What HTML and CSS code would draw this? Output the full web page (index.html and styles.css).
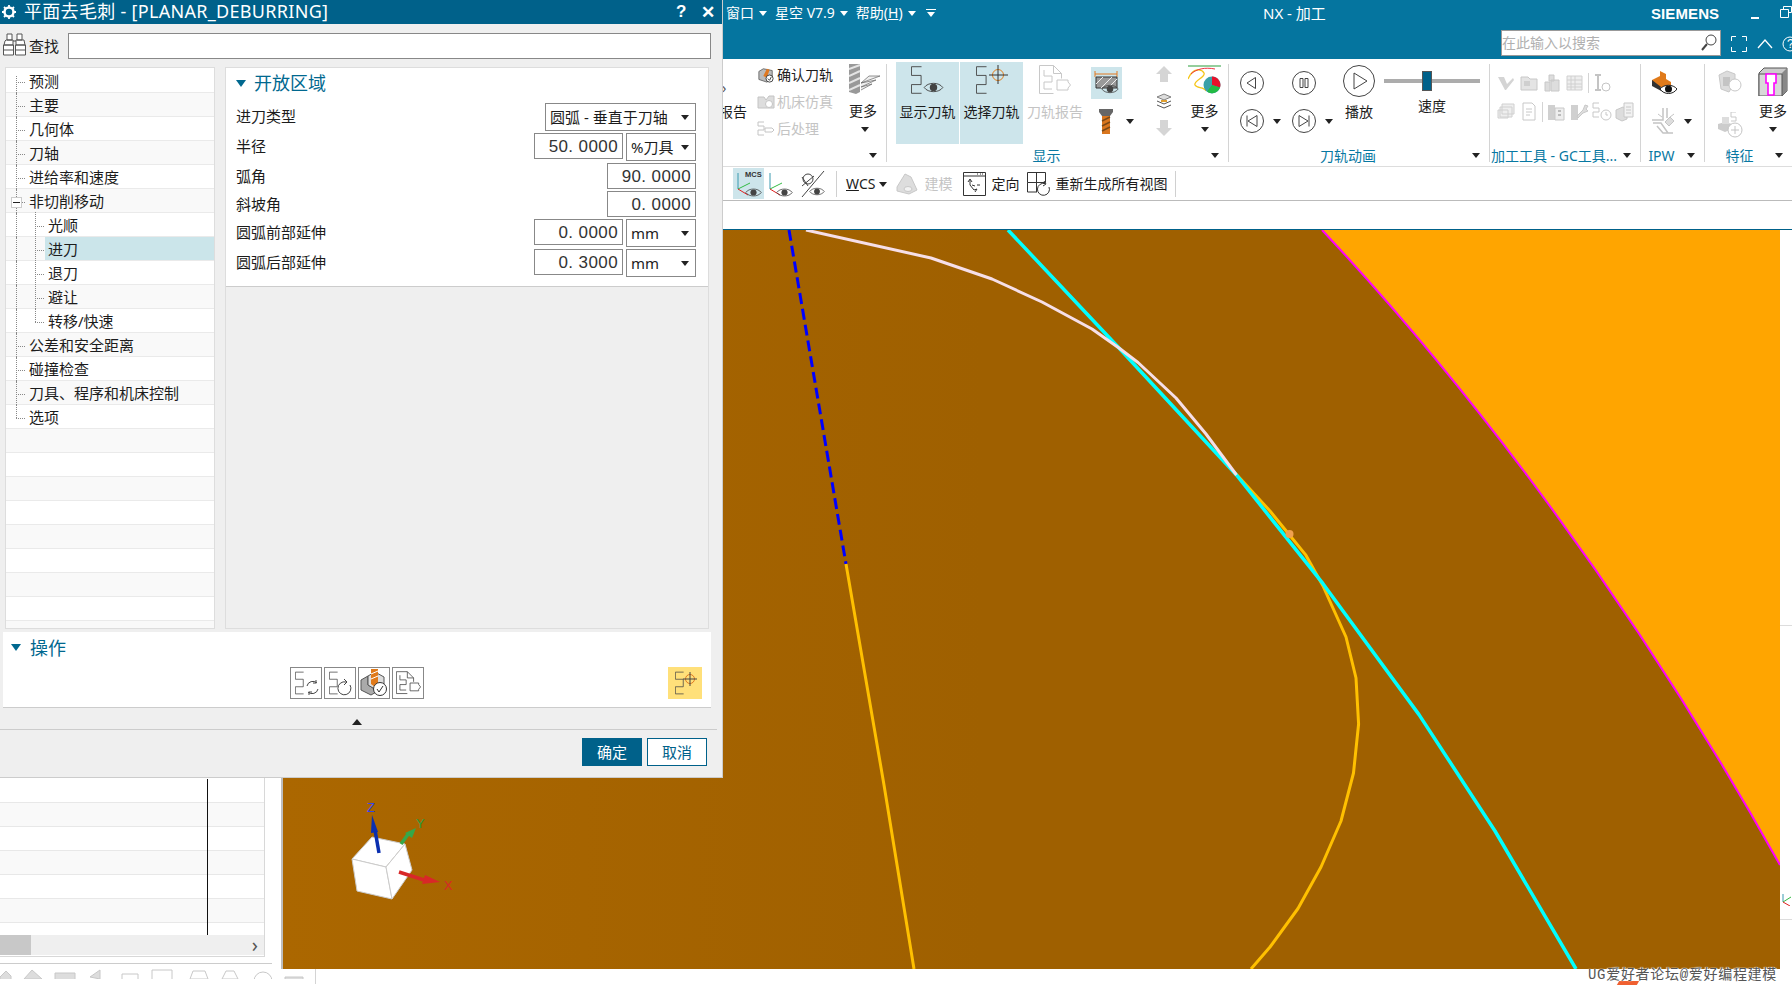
FILE: index.html
```html
<!DOCTYPE html>
<html lang="zh">
<head>
<meta charset="utf-8">
<title>NX - 加工</title>
<link rel="stylesheet" href="styles.css">
</head>
<body>
<svg class="defs" width="0" height="0" aria-hidden="true">
  <symbol id="tp" viewBox="0 0 12 30"><path d="M11.5.5H.5V10H11V20H.5v9.5h11" fill="none" stroke="currentColor"/></symbol>
  <symbol id="eye" viewBox="0 0 22 14"><path d="M1 7C5 1 17 1 21 7 17 13 5 13 1 7Z" fill="none" stroke="currentColor"/><circle cx="11" cy="7" r="4" fill="currentColor"/></symbol>
  <symbol id="doc" viewBox="0 0 32 30"><path d="M.5.5h14l8 8v5M.5.5v28h14M14.5.5v8h8M5 5v6h8v6H5v7h8M18 15h11v2l2.500 3-2.500 3v2H18z" fill="none" stroke="currentColor"/></symbol>
  <symbol id="block" viewBox="0 0 18 18"><path d="M1 5l5-3 10 2v9l-6 4-9-3z" fill="#bbb" stroke="#666"/><path d="M6 10l4-8 3 1-3 9z" fill="#e07820"/><circle cx="13" cy="13" r="4" fill="#fff" stroke="#333"/><path d="M11 13l2 2 2-4" fill="none" stroke="#333"/></symbol>
  <symbol id="ghost" viewBox="0 0 20 20"><path d="M2 4h7l2 2h7v11H2z" fill="#e4e4e4" stroke="#c8c8c8"/><path d="M5 8h6v5H5z" fill="#cfcfcf"/></symbol>
</svg>
<div class="app">
  <header class="topbar">
    <div class="top-row">
      <nav class="menu">
        <span>窗口</span><i class="tri tri-w"></i>
        <span>星空 V7.9</span><i class="tri tri-w"></i>
        <span>帮助(<u>H</u>)</span><i class="tri tri-w"></i>
        <i class="tri tri-w tri-bar"></i>
      </nav>
      <div class="app-title">NX - 加工</div>
      <div class="brand">SIEMENS</div>
      <div class="win-min"></div>
      <svg class="win-restore" width="12" height="12" viewBox="0 0 12 12"><path d="M3.500 3V.5h8v6h-3M.5 3.500h8v8h-8z" fill="none" stroke="#fff"/></svg>
    </div>
    <div class="search-row">
      <div class="search"><span>在此输入以搜索</span>
        <svg width="16" height="18" viewBox="0 0 16 18"><circle cx="10" cy="6" r="5" fill="none" stroke="#444"/><path d="M6 10l-5 6" stroke="#444" stroke-width="2"/></svg>
      </div>
      <svg class="top-ico" width="16" height="16" viewBox="0 0 16 16"><path d="M.5 5V.5H5M11 .5h4.500V5M15.500 11v4.500H11M5 15.500H.5V11" fill="none" stroke="#fff"/></svg>
      <svg class="top-ico" width="16" height="10" viewBox="0 0 16 10"><path d="M1 9l7-8 7 8" fill="none" stroke="#fff" stroke-width="1.300"/></svg>
      <svg class="top-ico help" width="16" height="16" viewBox="0 0 16 16"><circle cx="8" cy="8" r="7" fill="none" stroke="#fff"/><text x="5" y="12" class="help-q">?</text></svg>
    </div>
  </header>

  <section class="ribbon">
    <div class="group g-a">
      <div class="g-body">
        <div class="partial"><span class="chev">›</span><span class="rep">报告</span></div>
        <div class="list">
          <div class="list-row"><svg width="18" height="16"><use href="#block" width="18" height="16"/></svg><span>确认刀轨</span></div>
          <div class="list-row off"><svg width="18" height="16" viewBox="0 0 18 16"><path d="M1 3h6l2 3 3-4h5v12H1z" fill="#ddd" stroke="#c4c4c4"/><circle cx="12" cy="10" r="3.500" fill="#fff" stroke="#c4c4c4"/></svg><span>机床仿真</span></div>
          <div class="list-row off"><svg width="18" height="16" viewBox="0 0 18 16"><path d="M7 1H1v4h6v4H1v5h6M8 7h7l2 2-2 2H8z" fill="none" stroke="#c4c4c4"/></svg><span>后处理</span></div>
        </div>
        <div class="big-more">
          <svg width="31" height="30" viewBox="0 0 31 30"><path d="M0 0h11v28l-4 2-7-2z" fill="#999"/><path d="M0 5l11-4M0 12l11-5M0 19l11-5M0 26l11-5" stroke="#e4e4e4" stroke-width="2"/><path d="M12 19l19-7H20l-8 7 15-3-15 7 11-3-11 6" fill="#eee" stroke="#666" stroke-width=".7"/></svg>
          <span>更多</span><i class="tri"></i>
        </div>
      </div>
      <div class="g-label"><span></span><i class="tri"></i></div>
    </div>

    <div class="group g-show">
      <div class="g-body">
        <div class="tall on">
          <svg class="dark" width="33" height="30" viewBox="0 0 33 30"><use href="#tp" width="11" height="30"/><use href="#eye" x="12" y="16" width="21" height="13"/></svg>
          <span>显示刀轨</span>
        </div>
        <div class="tall on">
          <svg class="dark" width="32" height="30" viewBox="0 0 32 30"><use href="#tp" width="11" height="30"/><circle cx="22" cy="10" r="5.500" fill="none" stroke="#e08020"/><path d="M13 10h19M22 0v19" stroke="#333"/></svg>
          <span>选择刀轨</span>
        </div>
        <div class="tall off">
          <svg class="pale" width="32" height="30"><use href="#doc" width="32" height="30"/></svg>
          <span>刀轨报告</span>
        </div>
        <div class="small-col">
          <div class="sq on">
            <svg width="25" height="26" viewBox="0 0 25 26"><path d="M1 4h22M1 1v6M23 1v6" stroke="#e07820"/><path d="M2 7h21v11H2z" fill="#999" stroke="#333"/><path d="M2 14l7-7M7 18L18 7M14 18l9-9" stroke="#eee"/><use href="#eye" x="7" y="13" width="18" height="12" class="dark"/></svg>
          </div>
          <div class="drill-row">
            <svg width="14" height="25" viewBox="0 0 14 25"><path d="M0 0h14v3l-3 4H3L0 3z" fill="#666"/><path d="M3 7h8v18H3z" fill="#d9761e"/><path d="M3 12l8-4M3 17l8-4M3 22l8-4" stroke="#7a4a18" stroke-width="1.500"/></svg>
            <i class="tri"></i>
          </div>
        </div>
        <div class="arrows">
          <svg width="16" height="16" viewBox="0 0 16 16"><path d="M8 0l8 8h-4v8H4V8H0z" fill="#d5d5d5"/></svg>
          <svg width="16" height="16" viewBox="0 0 16 16"><path d="M1 4l7-3 7 3-7 3z" fill="#ddd" stroke="#555" stroke-width=".7"/><path d="M1 8l7 3 7-3" fill="none" stroke="#555"/><path d="M1 12l7 3 7-3" fill="none" stroke="#555"/><path d="M5 7h6v2H5z" fill="#e0a030"/></svg>
          <svg width="16" height="16" viewBox="0 0 16 16"><path d="M8 16L0 8h4V0h8v8h4z" fill="#d5d5d5"/></svg>
        </div>
        <div class="big-more">
          <svg width="33" height="30" viewBox="0 0 33 30"><path d="M0 2h33" stroke="#2a9d3a"/><path d="M0 15c5-12 14-10 16-6s-11 8-9 12 9 1 11 6" fill="none" stroke="#f5c518" stroke-width="1.300"/><path d="M3 10c5-5 14-7 24-5" fill="none" stroke="#ee3344"/><circle cx="24" cy="21" r="8.500" fill="#3aa0a8"/><path d="M24 21v-8.500a8.500 8.500 0 0 1 8 11z" fill="#e8102a"/><path d="M24 21l8 2.500a8.500 8.500 0 0 1-13 4z" fill="#22bb44"/></svg>
          <span>更多</span><i class="tri"></i>
        </div>
      </div>
      <div class="g-label"><span>显示</span><i class="tri"></i></div>
    </div>

    <div class="group g-anim">
      <div class="g-body">
        <div class="ctl-col c1">
          <div class="ctl"><svg class="round" width="24" height="24" viewBox="0 0 24 24"><circle cx="12" cy="12" r="11.500"/><path d="M15.500 6.500v11L7 12z"/></svg></div>
          <div class="ctl"><svg class="round" width="24" height="24" viewBox="0 0 24 24"><circle cx="12" cy="12" r="11.500"/><path d="M7 6.500v11M17 6.500v11L8 12z"/></svg><i class="tri"></i></div>
        </div>
        <div class="ctl-col c2">
          <div class="ctl"><svg class="round" width="24" height="24" viewBox="0 0 24 24"><circle cx="12" cy="12" r="11.500"/><path d="M8 7.500h3v9H8zM13 7.500h3v9h-3z"/></svg></div>
          <div class="ctl"><svg class="round" width="24" height="24" viewBox="0 0 24 24"><circle cx="12" cy="12" r="11.500"/><path d="M17 6.500v11M7 6.500v11l9-5.500z"/></svg><i class="tri"></i></div>
        </div>
        <div class="play">
          <svg class="round" width="32" height="32" viewBox="0 0 32 32"><circle cx="16" cy="16" r="15.500"/><path d="M11 8v16l13-8z"/></svg>
          <span>播放</span>
        </div>
        <div class="speed">
          <div class="slider"><div class="thumb"></div></div>
          <span>速度</span>
        </div>
      </div>
      <div class="g-label"><span>刀轨动画</span><i class="tri"></i></div>
    </div>

    <div class="group g-tools">
      <div class="g-body">
        <div class="tool-rows">
          <div class="tool-row">
            <svg width="20" height="20" viewBox="0 0 20 20"><path d="M2 4h6l3 7 6-6 1 2-8 10H9z" fill="#d4d4d4"/></svg>
            <svg width="20" height="20"><use href="#ghost" width="20" height="20"/></svg>
            <svg width="20" height="20" viewBox="0 0 20 20"><path d="M3 9h5v9H3zM9 7h8v11H9zM7 2h5v6H7z" fill="#ddd" stroke="#c8c8c8"/></svg>
            <svg width="20" height="20" viewBox="0 0 20 20"><path d="M2 3h15v14H2zM2 7h15M2 11h15M2 14h15M6 3v14M10 3v14" fill="#eee" stroke="#d0d0d0"/></svg>
            <b class="vsep"></b>
            <svg width="20" height="20" viewBox="0 0 20 20"><path d="M3 2h6M6 2v15M3 17h6" stroke="#c4c4c4" stroke-width="2"/><circle cx="14" cy="14" r="4" fill="none" stroke="#c4c4c4"/></svg>
          </div>
          <div class="tool-row">
            <svg width="20" height="20" viewBox="0 0 20 20"><path d="M6 2h12v10H6zM4 5h12v10H4zM2 8h10v8H2z" fill="#eee" stroke="#d0d0d0"/></svg>
            <svg width="20" height="20" viewBox="0 0 20 20"><path d="M4 1h9l3 3v14H4zM7 7h6M7 10h6M7 13h4" fill="#fff" stroke="#c8c8c8"/></svg>
            <b class="vsep"></b>
            <svg width="20" height="20" viewBox="0 0 20 20"><path d="M2 3h7v15H2z" fill="#d0d0d0"/><path d="M9 6h9v12H9z" fill="#eee" stroke="#c8c8c8"/><path d="M12 9h3M12 13h3" stroke="#bbb" stroke-width="2"/></svg>
            <svg width="20" height="20" viewBox="0 0 20 20"><path d="M2 3h7v15H2z" fill="#d0d0d0"/><path d="M8 14l6-6 2-5 3 1-2 3 2 2-5 2-5 5z" fill="#ddd" stroke="#c8c8c8"/></svg>
            <svg width="20" height="20" viewBox="0 0 20 20"><path d="M7 1H1v5h6v4H1v5h6" fill="none" stroke="#c8c8c8"/><circle cx="14" cy="13" r="5" fill="none" stroke="#c8c8c8"/><path d="M14 10v3h2" stroke="#c8c8c8" fill="none"/></svg>
            <svg width="20" height="20" viewBox="0 0 20 20"><path d="M1 8l7-3 4 2v10l-5 2-6-3z" fill="#ddd" stroke="#c8c8c8"/><path d="M9 1h9v14H9z" fill="#f2f2f2" stroke="#c8c8c8"/><path d="M11 5h5M11 8h5M11 11h5" stroke="#c8c8c8"/></svg>
          </div>
        </div>
      </div>
      <div class="g-label"><span>加工工具 - GC工具...</span><i class="tri"></i></div>
    </div>

    <div class="group g-ipw">
      <div class="g-body">
        <div class="ipw-col">
          <svg width="25" height="26" viewBox="0 0 25 26"><path d="M0 10l8-4V1l6 3v5l5 3v5l-6 3-13-6z" fill="#e07a1a"/><path d="M0 10v6l13 7v-3z" fill="#333"/><path d="M8 19c4-5 13-5 17 0-4 6-13 6-17 0z" fill="#fff" stroke="#222"/><circle cx="16.500" cy="19" r="3.500" fill="#111"/></svg>
          <div class="drill-row ipw-row">
            <svg width="25" height="26" viewBox="0 0 25 26"><path d="M0 12h11V0M15 0v10M5 18l6 7h10M1 15h8l7 10" fill="none" stroke="#c4c4c4" stroke-width="1.500"/><path d="M13 14l5-5 4 4-5 5z" fill="#ddd" stroke="#c4c4c4"/><path d="M6 6l4 3M22 6l-4 3" stroke="#c4c4c4"/></svg>
            <i class="tri"></i>
          </div>
        </div>
      </div>
      <div class="g-label"><span>IPW</span><i class="tri"></i></div>
    </div>

    <div class="group g-feat">
      <div class="g-body">
        <div class="feat-col">
          <svg width="26" height="26" viewBox="0 0 26 26"><path d="M2 5l8-4 8 3v8l-6 10-8-3z" fill="#ddd" stroke="#c8c8c8"/><path d="M6 7h7v9H6z" fill="#c4c4c4"/><circle cx="18" cy="15" r="6" fill="#fff" stroke="#c8c8c8"/></svg>
          <svg width="26" height="26" viewBox="0 0 26 26"><path d="M1 12l7-2 7 2v5l-7 3-7-3z" fill="#ccc"/><path d="M5 5h7v7H5z" fill="#ddd"/><path d="M19 0h-5v5h5v4h-5" fill="none" stroke="#c8c8c8"/><circle cx="18" cy="18" r="7" fill="#fff" stroke="#c4c4c4"/><path d="M18 14v8M14 18h8" stroke="#c4c4c4"/></svg>
        </div>
        <div class="big-more feat-more">
          <svg width="30" height="29" viewBox="0 0 30 29"><path d="M1 6l5-5h23v23l-5 5H1z" fill="#ccc" stroke="#555"/><path d="M24 6l5-5v23l-5 5z" fill="#888"/><path d="M1 7h23v22H1z" fill="#d8d8d8" stroke="#555"/><path d="M8 7h10v9h-2v12H10V16H8z" fill="#fff" stroke="#f0f" stroke-width="1.600"/></svg>
          <span>更多</span><i class="tri"></i>
        </div>
      </div>
      <div class="g-label"><span>特征</span><i class="tri"></i></div>
    </div>
  </section>

  <section class="toolbar">
    <div class="mcs on">
      <svg width="26" height="28" viewBox="0 0 26 28"><text x="9" y="7" class="mcs-t">MCS</text><path d="M2 3v16" stroke="#3a9ab0"/><path d="M2 19l12-6" stroke="#33bb44"/><path d="M2 19l10 6" stroke="#e02020"/><use href="#eye" x="9" y="17" width="17" height="11" class="dark"/></svg>
    </div>
    <svg class="t-ico t1" width="25" height="28" viewBox="0 0 25 28"><path d="M2 3v16" stroke="#3a9ab0"/><path d="M2 19l12-6" stroke="#33bb44"/><path d="M2 19l10 6" stroke="#e02020"/><use href="#eye" x="8" y="17" width="17" height="11" class="dark"/></svg>
    <svg class="t-ico t2" width="24" height="28" viewBox="0 0 24 28"><circle cx="7" cy="9" r="5" fill="none" stroke="#444"/><path d="M1 27L23 1M1 16l12-10M1 7l6 9" stroke="#444" fill="none"/><use href="#eye" x="8" y="16" width="16" height="11" class="dark"/></svg>
    <b class="t-sep s1"></b>
    <span class="t-text wcs"><u>W</u>CS</span><i class="tri wcs-tri"></i>
    <svg class="t-ico t3" width="22" height="24" viewBox="0 0 22 24"><path d="M1 15L9 2l6 3 6 13-8 4-12-3z" fill="#ddd" stroke="#c8c8c8"/><ellipse cx="12" cy="17" rx="4" ry="2.500" fill="#f2f2f2" stroke="#c8c8c8"/></svg>
    <span class="t-text off t-build">建模</span>
    <svg class="t-ico t4" width="23" height="24" viewBox="0 0 23 24"><path d="M.5.5h22v23H.5zM.5 4h22" fill="none" stroke="#333"/><path d="M17 2h1M19 2h1M14 2h1" stroke="#333"/><path d="M7 8v5M5 10l2-3 2 3M7 13l4 5 3-1-2 3M9 13l3 1M14 13h3" fill="none" stroke="#333"/></svg>
    <span class="t-text t-ori">定向</span>
    <svg class="t-ico t5" width="24" height="24" viewBox="0 0 24 24"><path d="M.5.5h18v10H.5zM.5 10.500V20H10M9.500.5V20" fill="none" stroke="#333"/><path d="M22 15a6 6 0 1 1-4-3.500" fill="none" stroke="#333"/><path d="M17 9l2 3-3 2" fill="none" stroke="#333"/></svg>
    <span class="t-text t-regen">重新生成所有视图</span>
    <b class="t-sep s2"></b>
  </section>
  <div class="strip"></div>

  <main class="workspace">
    <aside class="nav">
      <div class="nav-panel">
        <div class="nav-rows">
          <div class="nav-row"></div><div class="nav-row alt"></div><div class="nav-row"></div><div class="nav-row alt"></div><div class="nav-row"></div><div class="nav-row alt"></div><div class="nav-row last"></div>
          <b class="nav-line"></b>
        </div>
        <div class="hscroll"><div class="hthumb"></div><span class="hchev">›</span></div>
      </div>
      <div class="nav-rule"></div>
      <div class="bottom-tools">
        <svg width="315" height="10" viewBox="0 0 315 10"><g fill="#ddd" stroke="#c8c8c8"><path d="M0 8l6-6 5 5v5H0zM24 10l8-9 10 9zM55 4h20v8H55zM90 8l10-7v9z"/><path d="M122 5h16v7h-16zM152 1h20v11h-20zM190 10l3-8h12l3 8zM222 10l4-8h8l4 8z" fill="none"/><circle cx="263" cy="12" r="9" fill="none"/><path d="M285 8h18v4h-18z"/></g></svg>
        <b class="b-sep"></b>
      </div>
    </aside>
    <div class="stage">
      <div class="canvas">
        <svg class="scene" viewBox="283 230 1497 739" width="1497" height="739">
          <path class="p-face" d="M1322 230C1430 345 1610 560 1780 865V230Z"/>
          <path class="p-mag" d="M1322 230C1430 345 1610 560 1780 865"/>
          <path class="p-blue" d="M789 230L846 564"/>
          <path class="p-yel" d="M846 564L884 785 914 969"/>
          <path class="p-yel" d="M1237 475L1270 511 1305.500 554.600 1323 586 1346 637 1356 678 1358.600 724 1353.500 773 1341 821 1321 867 1298 908.500 1270 947 1251 969"/>
          <path class="p-cyan" d="M1008 230L1119 348 1236.500 475 1323 583.700 1419 714.600 1495 831 1576 969"/>
          <path class="p-pink" d="M806 230L931 258 992 279 1042 302 1092 329 1119 348 1138 362.500 1176 398 1206 434 1236.500 475"/>
          <circle cx="1289.500" cy="534" r="4" fill="#f0a050"/>
          <g class="triad">
            <path d="M372 837L405 844 386 867 352 859Z" fill="#fff" stroke="#ccc"/>
            <path d="M352 859L386 867 392 899 357 891Z" fill="#fff" stroke="#ccc"/>
            <path d="M405 844L412 870 392 899 386 867Z" fill="#fff" stroke="#ccc"/>
            <path d="M379 853L375 830" stroke="#0a2fb0" stroke-width="3.500"/><path d="M372 815L378 832 371 833Z" fill="#0a2fb0"/>
            <path d="M401 844L409 833" stroke="#35a84a" stroke-width="3.500"/><path d="M416 828L412 838 405 833Z" fill="#35a84a"/>
            <path d="M399 872L424 880" stroke="#d82828" stroke-width="3.500"/><path d="M440 882L422 884 425 875Z" fill="#d82828"/>
            <text x="367" y="812" class="ax ax-z">Z</text>
            <text x="416" y="828" class="ax ax-y">Y</text>
            <text x="444" y="890" class="ax ax-x">X</text>
          </g>
        </svg>
      </div>
      <div class="wm-mark"></div>
      <div class="watermark">UG爱好者论坛@爱好编程建模</div>
    </div>
    <aside class="side">
      <b class="side-line l1"></b>
      <svg class="side-ico" width="11" height="12" viewBox="0 0 11 12"><path d="M1 0v8" stroke="#3a9ab0"/><path d="M1 8l8-5" stroke="#33bb44"/><path d="M1 8l7 4" stroke="#e02020"/></svg>
      <b class="side-line l2"></b>
    </aside>
  </main>

  <div class="dialog">
    <div class="dlg-title">
      <svg width="14" height="14" viewBox="0 0 14 14"><circle cx="7" cy="7" r="4.500" fill="none" stroke="#fff" stroke-width="2.500"/><path d="M7 0v3M7 11v3M0 7h3M11 7h3M2 2l2 2M10 10l2 2M12 2l-2 2M4 10l-2 2" stroke="#fff" stroke-width="1.800"/></svg>
      <span class="dlg-name">平面去毛刺 - [PLANAR_DEBURRING]</span>
      <span class="dlg-q">?</span>
      <span class="dlg-x">✕</span>
    </div>
    <div class="find">
      <svg width="24" height="23" viewBox="0 0 24 23"><path d="M4 1h5v6H4zM14 1h5v6h-5zM3 7h7v5H1l1-4zM13 7h8l1 5h-9zM.5 12h10v10H.5zM12.500 12h10v10h-10zM.5 17h10M12.500 17h10M10 8h3" fill="#fff" stroke="#555"/></svg>
      <span class="find-l">查找</span>
      <div class="find-in"></div>
    </div>
    <div class="dlg-main">
      <div class="tree">
        <div class="row"><span class="lb">预测</span></div>
        <div class="row alt"><span class="lb">主要</span></div>
        <div class="row"><span class="lb">几何体</span></div>
        <div class="row alt"><span class="lb">刀轴</span></div>
        <div class="row"><span class="lb">进给率和速度</span></div>
        <div class="row alt"><b class="expander"></b><span class="lb">非切削移动</span></div>
        <div class="row kid"><span class="lb">光顺</span></div>
        <div class="row alt kid sel"><span class="lb">进刀</span></div>
        <div class="row kid"><span class="lb">退刀</span></div>
        <div class="row alt kid"><span class="lb">避让</span></div>
        <div class="row kid kid-end"><span class="lb">转移/快速</span></div>
        <div class="row alt"><span class="lb">公差和安全距离</span></div>
        <div class="row"><span class="lb">碰撞检查</span></div>
        <div class="row alt"><span class="lb">刀具、程序和机床控制</span></div>
        <div class="row row-end"><span class="lb">选项</span></div>
        <div class="row alt none"></div><div class="row none"></div><div class="row alt none"></div><div class="row none"></div>
        <div class="row alt none"></div><div class="row none"></div><div class="row alt none"></div><div class="row none"></div><div class="row alt none"></div>
      </div>
      <div class="props">
        <div class="props-white">
          <div class="sec-h sec-open"><i class="tri tri-b"></i><span>开放区域</span></div>
          <div class="prop r28"><label>进刀类型</label><div class="sel-box wide">圆弧 - 垂直于刀轴<i class="tri"></i></div></div>
          <div class="prop r28"><label>半径</label><div class="num">50. 0000</div><div class="sel-box unit">%刀具<i class="tri"></i></div></div>
          <div class="prop r26"><label>弧角</label><div class="num">90. 0000</div></div>
          <div class="prop r26"><label>斜坡角</label><div class="num">0. 0000</div></div>
          <div class="prop r28"><label>圆弧前部延伸</label><div class="num">0. 0000</div><div class="sel-box unit">mm<i class="tri"></i></div></div>
          <div class="prop r28"><label>圆弧后部延伸</label><div class="num">0. 3000</div><div class="sel-box unit">mm<i class="tri"></i></div></div>
        </div>
      </div>
    </div>
    <div class="ops">
      <div class="sec-h ops-h"><i class="tri tri-b"></i><span>操作</span></div>
      <div class="ops-btns">
        <div class="op-b"><svg width="28" height="28" viewBox="0 0 28 28"><use href="#tp" x="3" y="2" width="9" height="24" class="dark"/><path d="M15 17a6 6 0 0 1 10-3M26 20a6 6 0 0 1-10 3M24 11v3h-3M17 26v-3h3" fill="none" stroke="#444"/></svg></div>
        <div class="op-b"><svg width="28" height="28" viewBox="0 0 28 28"><use href="#tp" x="3" y="2" width="9" height="24" class="dark"/><path d="M24 16a6.500 6.500 0 1 1-4-3M18 10l3 3-3 3" fill="none" stroke="#444"/></svg></div>
        <div class="op-b"><svg width="28" height="28" viewBox="0 0 28 28"><path d="M1 11l7-4v9l10 6-7 4-10-5z" fill="#aaa" stroke="#555"/><path d="M8 7l7-4 9 5v10l-6 4-10-6z" fill="#ddd" stroke="#555"/><path d="M11 0h7v15l-3 3-4-3z" fill="#e07a1a"/><path d="M11 5l7-3M11 10l7-3" stroke="#fff"/><circle cx="20" cy="20" r="6.500" fill="#fff" stroke="#333"/><path d="M17 20l2 3 4-6" fill="none" stroke="#333"/></svg></div>
        <div class="op-b"><svg class="dark" width="28" height="28"><use href="#doc" x="2" y="2" width="25" height="24"/></svg></div>
        <div class="op-b op-y"><svg width="26" height="28" viewBox="0 0 26 28"><use href="#tp" x="3" y="2" width="9" height="24" class="dark"/><circle cx="18" cy="10" r="4.500" fill="none" stroke="#e07820"/><path d="M11 10h14M18 3v14" stroke="#444"/></svg></div>
      </div>
    </div>
    <div class="more-row"><i class="tri-up"></i></div>
    <div class="dlg-foot">
      <div class="btn ok">确定</div>
      <div class="btn cancel">取消</div>
    </div>
  </div>
</div>
</body>
</html>
```
FILE: styles.css
```css
* { box-sizing: border-box; }
html, body { margin: 0; padding: 0; }
body { width: 1792px; height: 985px; overflow: hidden; background: #fff; font-family: "Noto Sans", "Noto Sans CJK SC", sans-serif; font-size: 14px; color: #1c1c1c; }
.defs { position: absolute; }
svg { display: block; flex: none; }
i, b { display: block; font-style: normal; }
.dark { color: #444; }
.pale { color: #c8c8c8; }

.app { position: relative; width: 1792px; height: 985px; overflow: hidden; display: flex; flex-direction: column; }

.tri { width: 0; height: 0; border-left: 4.5px solid transparent; border-right: 4.5px solid transparent; border-top: 5px solid #222; flex: none; }
.tri-w { border-top-color: #fff; }
.tri-b { border-left-width: 5.5px; border-right-width: 5.5px; border-top: 7px solid #00688f; }
.tri-bar { position: relative; margin-top: 2px; }
.tri-bar::before { content: ""; position: absolute; left: -5px; top: -8px; width: 10px; height: 1px; background: #fff; }

/* title area */
.topbar { height: 59px; background: #05759f; color: #fff; flex: none; }
.top-row { height: 26px; display: flex; align-items: center; padding-left: 726px; }
.menu { width: 537px; display: flex; align-items: center; line-height: 20px; flex: none; }
.menu .tri { margin: 0 8px 0 5px; }
.menu .tri-bar { margin: 2px 0 0 3px; }
.app-title { font-size: 15px; width: 388px; line-height: 20px; flex: none; }
.brand { font-family: "Liberation Sans", sans-serif; font-weight: 700; font-size: 15px; letter-spacing: .1px; width: 100px; flex: none; }
.win-min { width: 8px; height: 2px; background: #fff; margin: 9px 21px 0 0; flex: none; }
.win-restore { margin-top: -3px; }
.search-row { height: 33px; display: flex; align-items: flex-start; padding: 4px 0 0 1501px; }
.search { width: 220px; height: 26px; background: #fff; border: 1px solid #999; display: flex; align-items: center; justify-content: space-between; padding: 0 3px 0 0; color: #b0b0b0; line-height: 24px; flex: none; }
.top-ico { margin: 6px 0 0 10px; }
.top-ico + .top-ico { margin: 9px 0 0 10px; }
.top-ico.help { margin: 6px 0 0 9px; }
.help-q { font-size: 12px; fill: #fff; font-family: "Liberation Sans", sans-serif; }

/* ribbon */
.ribbon { height: 108px; flex: none; display: flex; padding-left: 724px; background: #fff; border-bottom: 1px solid #ddd; }
.group { margin-top: 5px; height: 98px; border-right: 1px solid #d4d4d4; display: flex; flex-direction: column; flex: none; }
.g-a { width: 163px; }
.g-show { width: 342px; }
.g-anim { width: 261px; }
.g-tools { width: 151px; }
.g-ipw { width: 64px; }
.g-feat { width: 87px; border-right: 0; }
.g-body { height: 82px; display: flex; flex: none; }
.g-label { height: 16px; padding-top: 3px; display: flex; align-items: center; color: #0878a2; line-height: 13px; white-space: nowrap; }
.g-label span { flex: 1; text-align: center; }
.g-label .tri { margin: 0 9px 0 5px; }
.g-feat .g-label span { padding-left: 4px; }

.partial { width: 33px; display: flex; flex-direction: column; padding-top: 14px; line-height: 20px; }
.chev { font-size: 14px; height: 24px; margin-left: -2px; color: #555; }
.rep { margin-left: -5px; }
.list { width: 92px; margin-top: -3px; }
.list-row { height: 27px; display: flex; align-items: center; gap: 2px; line-height: 20px; white-space: nowrap; }
.off { color: #c4c4c4; }
.big-more { width: 31px; display: flex; flex-direction: column; align-items: center; line-height: 20px; white-space: nowrap; }
.big-more span { margin: 7px 3px 0 0; height: 20px; }
.big-more .tri { margin-top: 6px; }

.g-show .g-body { padding-left: 9px; }
.tall { width: 63px; height: 82px; margin: -2px 1px 0 0; display: flex; flex-direction: column; align-items: center; padding-top: 3px; line-height: 20px; white-space: nowrap; }
.on { background: #cde5eb; }
.tall span { margin-top: 7px; }
.tall.off { width: 56px; margin: -2px 8px 0 3px; }
.small-col { width: 42px; }
.sq { width: 31px; height: 32px; margin-top: 3px; display: flex; align-items: center; justify-content: center; }
.drill-row { display: flex; align-items: center; margin-top: 10px; padding-left: 8px; }
.drill-row .tri { margin-left: 13px; }
.arrows { width: 16px; margin-left: 23px; display: flex; flex-direction: column; gap: 11px; padding-top: 2px; }
.g-show .big-more { width: 33px; margin-left: 16px; }
.g-show .big-more span { margin-right: 0; }

.g-anim .g-body { padding: 7px 0 0 11px; }
.ctl-col { display: flex; flex-direction: column; gap: 14px; }
.c1 { width: 52px; }
.c2 { width: 51px; }
.ctl { display: flex; align-items: center; height: 24px; }
.ctl .tri { margin-left: 9px; }
.round { fill: none; stroke: #444; stroke-width: 1; }
.play { width: 32px; margin-top: -6px; display: flex; flex-direction: column; align-items: center; line-height: 20px; white-space: nowrap; }
.play span { margin-top: 5px; }
.speed { width: 96px; margin-left: 9px; display: flex; flex-direction: column; align-items: center; line-height: 20px; }
.slider { width: 96px; height: 20px; position: relative; display: flex; padding-left: 38px; }
.slider::before { content: ""; position: absolute; left: 0; right: 0; top: 8px; height: 4px; background: #acacac; }
.thumb { position: relative; width: 10px; height: 20px; background: #00618a; border: 1px solid #555; }
.speed span { margin-top: 5px; }

.tool-rows { padding: 9px 0 0 6px; display: flex; flex-direction: column; gap: 9px; }
.tool-row { display: flex; align-items: center; gap: 3px; height: 20px; }
.vsep { width: 1px; height: 20px; background: #d4d4d4; }
.ipw-col { padding: 6px 0 0 11px; }
.ipw-row { margin-top: 12px; padding-left: 0; }
.ipw-row .tri { margin-left: 7px; }
.feat-col { width: 53px; padding: 6px 0 0 12px; display: flex; flex-direction: column; gap: 16px; }
.feat-more { width: 30px; margin-top: 3px; }
.feat-more span { margin: 5px 0 0 0; }

/* second toolbar */
.toolbar { height: 34px; flex: none; display: flex; align-items: center; padding: 1px 0 0 733px; border-bottom: 1px solid #bbb; background: #fff; line-height: 20px; white-space: nowrap; }
.mcs { width: 31px; height: 31px; display: flex; align-items: center; justify-content: center; margin-top: -1px; }
.mcs-t { font: 700 7.500px "Liberation Sans", sans-serif; fill: #333; }
.t1 { margin-left: 4px; }
.t2 { margin-left: 8px; }
.t-sep { width: 1px; height: 26px; background: #d0d0d0; }
.s1 { margin-left: 11px; }
.wcs { margin-left: 9px; }
.wcs-tri { margin: 0 0 0 4px; }
.t3 { margin-left: 9px; }
.t-build { margin-left: 6px; }
.t4 { margin-left: 11px; }
.t-ori { margin-left: 5px; }
.t5 { margin-left: 8px; }
.t-regen { margin-left: 4px; }
.s2 { margin-left: 8px; }
.strip { height: 29px; flex: none; background: #fff; border-bottom: 1px solid #00618a; }

/* workspace */
.workspace { flex: 1; display: flex; min-height: 0; }
.nav { width: 281px; flex: none; display: flex; flex-direction: column; }
.nav-panel { height: 727px; width: 265px; border-right: 1px solid #d8d8d8; border-bottom: 1px solid #d8d8d8; display: flex; flex-direction: column; justify-content: flex-end; padding-bottom: 1px; }
.nav-rows { position: relative; display: flex; flex-direction: column; justify-content: flex-end; }
.nav-row { height: 24px; background: #fff; border-bottom: 1px solid #e8e8e8; }
.nav-row.alt { background: #f9f9f9; }
.nav-row.last { height: 12px; border: 0; }
.nav-line { position: absolute; left: 207px; top: 0; bottom: 0; width: 1px; background: #111; }
.hscroll { height: 20px; background: #efefef; position: relative; display: flex; align-items: center; justify-content: flex-end; padding-right: 6px; }
.hthumb { position: absolute; left: 0; top: 0; bottom: 0; width: 31px; background: #c8c8c8; }
.hchev { font-size: 20px; color: #555; line-height: 18px; }
.nav-rule { margin-top: 6px; height: 1px; width: 272px; background: #ccc; }
.bottom-tools { height: 21px; display: flex; align-items: flex-start; padding-top: 5px; }
.bottom-tools svg { width: 315px; margin-right: -34px; }
.b-sep { width: 1px; height: 16px; background: #d4d4d4; margin: -1px 0 0 34px; flex: none; }
.stage { position: relative; width: 1499px; flex: none; }
.canvas { width: 1499px; height: 739px; border-left: 2px solid #bdbdbd; background: linear-gradient(90deg, #ab6700 0, #a66400 300px, #9f6000 700px); }
.scene { fill: none; }
.p-face { fill: #ffa500; }
.p-mag { stroke: #f0f; stroke-width: 2; }
.p-blue { stroke: #0000ff; stroke-width: 3; stroke-dasharray: 11 5; }
.p-yel { stroke: #ffc000; stroke-width: 3; stroke-linejoin: round; }
.p-cyan { stroke: #00ffff; stroke-width: 3.500; stroke-linejoin: round; }
.p-pink { stroke: #f6dfe8; stroke-width: 3; stroke-linejoin: round; }
.ax { font: 13px "Liberation Sans", sans-serif; }
.ax-z { fill: #3344ee; }
.ax-y { fill: #2f9d3f; }
.ax-x { fill: #d82828; }
.watermark { position: absolute; right: 3px; bottom: 2px; font: 14px/16px "Liberation Mono", "Noto Sans CJK SC", monospace; letter-spacing: .7px; color: #555; text-shadow: 0 0 1px #fff, 1px 0 1px #fff, -1px 0 1px #fff; white-space: nowrap; }
.wm-mark { position: absolute; left: 1337px; bottom: 0; width: 20px; height: 4px; background: #f06030; transform: skewX(-30deg); }
.side { flex: 1; position: relative; background: #fff; }
.side-line { position: absolute; left: 0; right: 0; height: 1px; background: #ddd; }
.l1 { top: 395px; }
.l2 { top: 689px; }
.side-ico { position: absolute; left: 2px; top: 664px; }

/* dialog window */
.dialog { position: absolute; left: 0; top: 0; width: 723px; height: 778px; background: #efefef; border-right: 1px solid #ccc; border-bottom: 1px solid #ccc; display: flex; flex-direction: column; }
.dlg-title { height: 24px; background: #00618a; color: #fff; display: flex; align-items: center; padding-left: 2px; flex: none; }
.dlg-name { font-size: 18px; line-height: 22px; margin: -2px 0 0 8px; width: 652px; white-space: nowrap; letter-spacing: .3px; flex: none; }
.dlg-q { font: 700 17px/20px "Liberation Sans", sans-serif; width: 25px; flex: none; }
.dlg-x { font-size: 17px; line-height: 20px; font-weight: 700; }
.find { height: 43px; display: flex; align-items: flex-start; padding: 9px 11px 0 3px; flex: none; }
.find-l { font-size: 15px; line-height: 26px; margin-left: 2px; width: 38.500px; }
.find-in { flex: 1; height: 26px; background: #fff; border: 1px solid #888; }
.dlg-main { height: 562px; display: flex; padding-left: 5px; flex: none; }
.tree { width: 210px; height: 562px; overflow: hidden; background: #fff; border: 1px solid #ddd; padding-top: 1px; flex: none; }
.row { position: relative; height: 24px; background: #fff; border-bottom: 1px solid #eaeaea; padding-left: 23px; font-size: 15px; line-height: 25px; white-space: nowrap; display: flex; }
.row.alt { background: #f9f9f9; }
.row:not(.none)::before { content: ""; position: absolute; left: 10px; top: 13px; width: 9px; border-top: 1px dotted #888; }
.row:not(.none)::after { content: ""; position: absolute; left: 10px; top: 0; height: 24px; border-left: 1px dotted #888; }
.row:first-child::after { top: 7px; height: 17px; }
.row-end::after { height: 13px !important; }
.kid { padding-left: 39px; }
.kid::before { left: 29px !important; }
.kid .lb { position: relative; flex: 1; padding-left: 3px; }
.kid .lb::before { content: ""; position: absolute; left: -10px; top: -1px; height: 25px; border-left: 1px dotted #888; }
.kid-end .lb::before { height: 14px; }
.sel .lb { background: #cbe5ea; }
.expander { position: absolute; left: 5px; top: 8px; width: 11px; height: 11px; background: #fff; border: 1px solid #ccc; z-index: 1; }
.expander::before { content: ""; position: absolute; left: 1px; top: 4px; width: 7px; height: 1px; background: #222; }

.props { width: 484px; height: 562px; margin-left: 10px; background: #efefef; border: 1px solid #ddd; flex: none; }
.props-white { height: 219px; background: #fff; border-bottom: 1px solid #ccc; padding: 0 12px 0 10px; }
.sec-h { height: 35px; display: flex; align-items: center; color: #00688f; font-size: 18px; line-height: 24px; gap: 8px; }
.sec-open { padding-bottom: 5px; }
.prop { display: flex; justify-content: flex-end; align-items: flex-start; gap: 3px; margin-bottom: 2px; font-size: 15px; }
.r28 { height: 28px; }
.r26 { height: 26px; }
.prop label { margin-right: auto; line-height: 26px; }
.num { width: 89px; height: 26px; background: #fff; border: 1px solid #888; text-align: right; padding-right: 4px; font: 17px/26px "Liberation Sans", sans-serif; letter-spacing: .4px; color: #333; }
.sel-box { height: 28px; background: #fff; border: 1px solid #888; display: flex; align-items: center; justify-content: space-between; padding: 0 6px 0 4px; line-height: 26px; white-space: nowrap; }
.wide { width: 151px; }
.unit { width: 70px; }

.ops { width: 708px; height: 76px; margin: 3px 0 0 3px; background: #fff; border-bottom: 1px solid #ccc; flex: none; }
.ops-h { height: 31px; padding-left: 8px; gap: 9px; }
.ops-btns { display: flex; gap: 2px; padding: 4px 0 0 287px; }
.op-b { width: 32px; height: 32px; border: 1px solid #888; background: #fff; display: flex; align-items: center; justify-content: center; }
.op-y { margin-left: auto; margin-right: 9px; width: 34px; background: #ffe07a; border: 0; }
.more-row { height: 22px; margin-right: 5px; border-bottom: 1px solid #ccc; display: flex; justify-content: center; padding: 11px 3px 0 0; flex: none; }
.tri-up { width: 0; height: 0; border-left: 5.500px solid transparent; border-right: 5.500px solid transparent; border-bottom: 6px solid #222; }
.dlg-foot { display: flex; justify-content: flex-end; gap: 5px; padding: 8px 15px 0 0; }
.btn { width: 60px; height: 28px; font-size: 15px; line-height: 28px; text-align: center; }
.ok { background: #00618a; color: #fff; }
.cancel { border: 1px solid #00618a; color: #00618a; line-height: 26px; background: #fff; }
```
